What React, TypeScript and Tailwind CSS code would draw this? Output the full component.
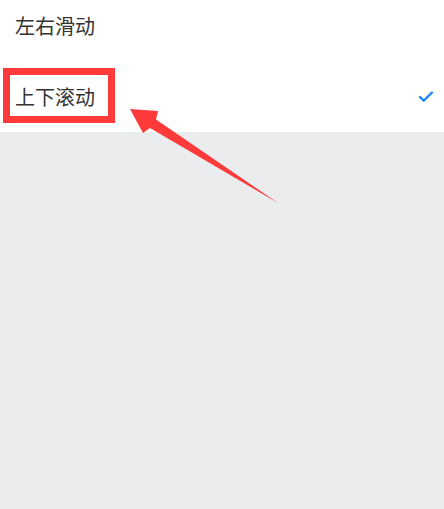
import { Check } from 'lucide-react'

const options = [
  { label: '左右滑动', checked: false },
  { label: '上下滚动', checked: true }
]

export default function App() {
  return (
    <div
      className="relative w-[444px] h-[509px] overflow-hidden bg-[#ebecee]"
      style={{ fontFamily: '"Noto Sans CJK SC", "Noto Sans", sans-serif' }}
    >
      <div className="-mt-[10px] bg-white">
        {options.map(opt => (
          <div
            key={opt.label}
            className="flex h-[71px] items-center justify-between pl-[15px] pr-[9px]"
          >
            <span className="text-[20px] leading-none text-[#333333]">
              {opt.label}
            </span>
            {opt.checked && (
              <Check className="w-[18px] h-[18px] text-[#1a86f4]" strokeWidth={3.2} />
            )}
          </div>
        ))}
      </div>

      {/* annotation */}
      <div className="absolute left-[3px] top-[68px] w-[112px] h-[55px] border-[7px] border-[#fe3a3a]" />
      <svg
        className="absolute left-0 top-0"
        width="444"
        height="509"
        viewBox="0 0 444 509"
      >
        <polygon
          points="130,109 158,111 156,119.5 278,203 150,128 143,133"
          fill="#fe3a3a"
        />
      </svg>
    </div>
  )
}
